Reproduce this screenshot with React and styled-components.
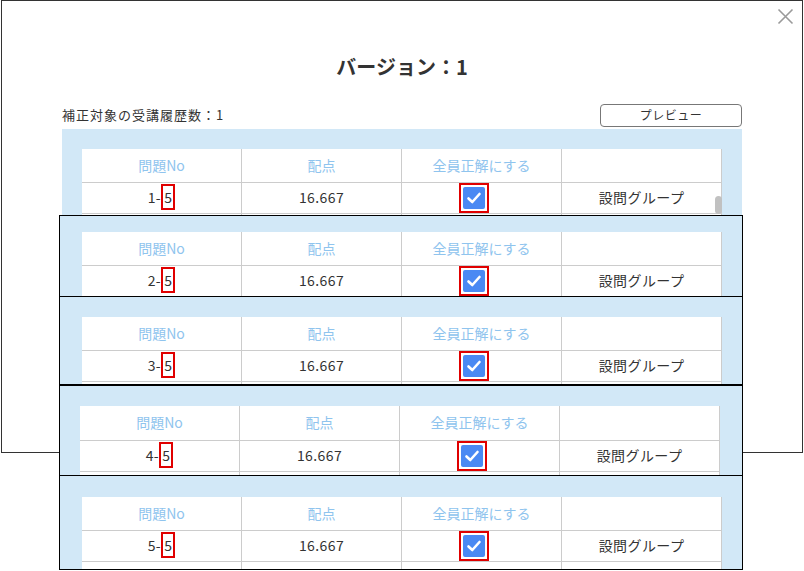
import React from "react";
import styled, { createGlobalStyle } from "styled-components";

const GlobalStyle = createGlobalStyle`
  html, body { margin: 0; padding: 0; background: #fff; }
  body {
    font-family: "Noto Sans CJK JP", "Noto Sans", sans-serif;
    color: #333;
  }
  *, *::before, *::after { box-sizing: border-box; }
`;

const SKY = "#d2e8f7";
const GRID = "#cccccc";

const Page = styled.div`
  position: relative;
  width: 804px;
  height: 571px;
  overflow: hidden;
`;

const Modal = styled.section`
  position: relative;
  margin-left: 1px;
  width: 802px;
  height: 453px;
  border: 1px solid #333;
  background: #fff;
  padding: 52px 60px 0;
  display: flex;
  flex-direction: column;
`;

const CloseButton = styled.button`
  position: absolute;
  top: 5px;
  right: 7px;
  width: 20px;
  height: 20px;
  padding: 0;
  border: 0;
  background: none;
  display: flex;
  align-items: center;
  justify-content: center;
`;

const Title = styled.h2`
  margin: 0;
  text-align: center;
  font-size: 20px;
  font-weight: 700;
  line-height: 28px;
  color: #333;
`;

const Toolbar = styled.div`
  margin-top: 22px;
  height: 24px;
  display: flex;
  align-items: center;
  justify-content: space-between;
`;

const CountLabel = styled.span`
  font-size: 13px;
  line-height: 18px;
  letter-spacing: 1px;
  color: #333;
`;

const PreviewButton = styled.button`
  width: 142px;
  height: 23px;
  border: 1px solid #777;
  border-radius: 4px;
  background: #fff;
  font-family: inherit;
  font-size: 12px;
  line-height: 20px;
  letter-spacing: 0.5px;
  color: #333;
  padding: 0;
`;

const ScrollArea = styled.div`
  position: relative;
  margin-top: 2px;
  flex: 1;
  background: ${SKY};
  padding: 20px 20px 0;
  overflow: hidden;
`;

const ScrollThumb = styled.div`
  position: absolute;
  left: 653px;
  top: 67px;
  width: 7px;
  height: 18px;
  border-radius: 4px;
  background: #c1c1c1;
`;

const Grid = styled.div`
  display: grid;
  grid-template-columns: repeat(4, 160px);
  width: 640px;
`;

const HeadCell = styled.div`
  height: ${(p) => p.$h || 34}px;
  padding-bottom: 2px;
  background: #fff;
  border-right: 1px solid ${GRID};
  border-bottom: 1px solid ${GRID};
  display: flex;
  align-items: center;
  justify-content: center;
  font-size: 14px;
  color: #8fc4ee;
`;

const BodyCell = styled.div`
  height: 31px;
  padding-bottom: 2px;
  background: #fff;
  border-right: 1px solid ${GRID};
  border-bottom: 1px solid ${GRID};
  display: flex;
  align-items: center;
  justify-content: center;
  font-size: 14px;
  letter-spacing: 0.4px;
  color: #333;
`;

const Marked = styled.span`
  display: inline-block;
  border: 2px solid #e00000;
  padding: 0 1px;
  line-height: 22px;
`;

const CheckFrame = styled.span`
  width: 30px;
  height: 30px;
  margin-right: 16px;
  margin-bottom: -2px;
  border: 2px solid #e00000;
  display: inline-flex;
  align-items: center;
  justify-content: center;
`;

const CheckBox = styled.span`
  width: 22px;
  height: 22px;
  border-radius: 2px;
  background: #4a89f3;
  display: inline-flex;
  align-items: center;
  justify-content: center;
`;

const CalloutStack = styled.div`
  position: absolute;
  top: 215px;
  left: 59px;
  width: 684px;
  display: flex;
  flex-direction: column;
`;

const Callout = styled.div`
  height: ${(p) => p.$h}px;
  margin-top: ${(p) => (p.$overlap ? -1 : 0)}px;
  border: 1px solid #000;
  background: ${SKY};
  padding: ${(p) => p.$top}px 0 0 ${(p) => p.$left}px;
  overflow: hidden;
`;

const CloseIcon = () => (
  <svg width="17" height="17" viewBox="0 0 17 17">
    <path d="M1.5 1.5 L15.5 15.5 M15.5 1.5 L1.5 15.5" stroke="#9a9a9a" strokeWidth="1.6" fill="none" />
  </svg>
);

const Check = () => (
  <CheckFrame>
    <CheckBox>
      <svg width="16" height="16" viewBox="0 0 16 16">
        <path d="M2.5 8.5 L6.3 12 L13.5 4" stroke="#fff" strokeWidth="2.6" fill="none" strokeLinecap="round" strokeLinejoin="round" />
      </svg>
    </CheckBox>
  </CheckFrame>
);

const HEADERS = ["問題No", "配点", "全員正解にする", ""];

function QuestionTable({ no, headH, extraRow }) {
  return (
    <Grid>
      {HEADERS.map((h, i) => (
        <HeadCell key={i} $h={headH}>{h}</HeadCell>
      ))}
      <BodyCell>
        {no}-<Marked>5</Marked>
      </BodyCell>
      <BodyCell>16.667</BodyCell>
      <BodyCell>
        <Check />
      </BodyCell>
      <BodyCell>設問グループ</BodyCell>
      {extraRow && [0, 1, 2, 3].map((i) => <BodyCell key={`x${i}`} />)}
    </Grid>
  );
}

const callouts = [
  { no: 2, h: 82, top: 16, left: 22, overlap: false },
  { no: 3, h: 89, top: 20, left: 22, overlap: true },
  { no: 4, h: 91, top: 20, left: 20, overlap: false, headH: 35 },
  { no: 5, h: 95, top: 21, left: 22, overlap: true },
];

export default function App() {
  return (
    <Page>
      <GlobalStyle />
      <Modal>
        <CloseButton aria-label="close">
          <CloseIcon />
        </CloseButton>
        <Title>バージョン：1</Title>
        <Toolbar>
          <CountLabel>補正対象の受講履歴数：1</CountLabel>
          <PreviewButton>プレビュー</PreviewButton>
        </Toolbar>
        <ScrollArea>
          <QuestionTable no={1} extraRow />
          <ScrollThumb />
        </ScrollArea>
      </Modal>
      <CalloutStack>
        {callouts.map((c) => (
          <Callout key={c.no} $h={c.h} $top={c.top} $left={c.left} $overlap={c.overlap}>
            <QuestionTable no={c.no} headH={c.headH} extraRow />
          </Callout>
        ))}
      </CalloutStack>
    </Page>
  );
}
